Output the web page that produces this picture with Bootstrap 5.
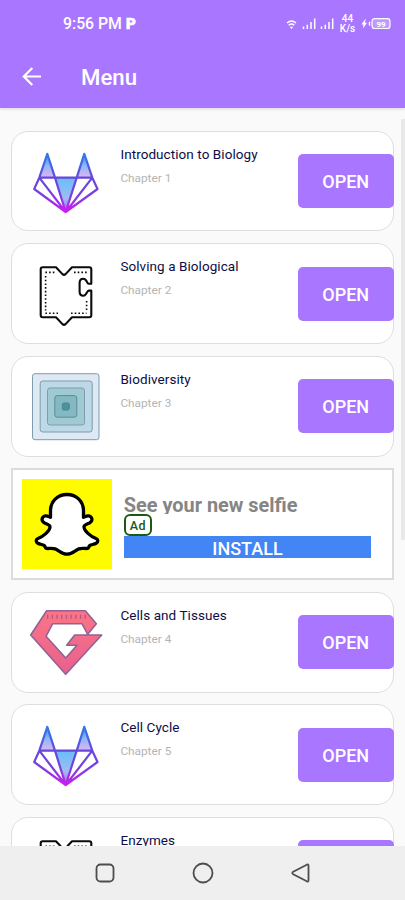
<!DOCTYPE html>
<html lang="en">
<head>
<meta charset="utf-8">
<meta name="viewport" content="width=device-width, initial-scale=1">
<title>Menu</title>
<link href="https://cdn.jsdelivr.net/npm/bootstrap@5.3.0/dist/css/bootstrap.min.css" rel="stylesheet">
<style>
  body { font-family: Roboto, sans-serif; background: #fafafa; height: 900px; }
  .app-head { background: #a977ff; height: 108px; box-shadow: 0 1px 3px rgba(0,0,0,.14); }
  .status { height: 46px; padding: 1px 14px 0 63px; }
  .clock { font-size: 15.8px; line-height: 20px; font-weight: 500; }
  .brand-p { font-size: 15px; font-weight: 900; -webkit-text-stroke: .7px #fff; margin-left: 4px; line-height: 20px; }
  .speed { font-size: 10px; line-height: 10.5px; font-weight: 500; width: 17px; margin: 1px 5px 0 4px; }
  .toolbar { height: 62px; padding: 0 20px; }
  .toolbar h1 { font-size: 22.2px; font-weight: 500; margin: 1px 0 0 37px; }
  .feed { padding: 22.5px 11.3px 0 11px; gap: 11.7px; }
  .chapter { height: 100.9px; flex: none; border: 1px solid #dedede; border-radius: 17px; background: #fff; }
  .pic { width: 100px; height: 99px; flex: none; margin-left: -1px; margin-top: -1px; overflow: visible; }
  .info { padding: 13px 0 0 9.4px; }
  .name { font-size: 13.5px; line-height: 18px; letter-spacing: .07px; color: #0d0d45; }
  .num { font-size: 11.8px; line-height: 16px; letter-spacing: 0; color: #b4b4b4; margin-top: 7px; }
  .open { width: 96px; height: 54px; background: #a977ff; border-radius: 5px; font-size: 18px; line-height: 27px; font-weight: 500; color: #fff; padding: 1px 0 0; border: 0; margin: 0 -1px 0 0; }
  .promo { height: 111.7px; flex: none; border: 2px solid #dcdcdc; background: #fff; padding: 9px 20.5px 0 9.4px; }
  .snap { width: 90px; height: 90px; background: #fffc00; flex: none; }
  .promo-body { padding: 14.3px 0 0 11.4px; }
  .headline { height: 20px; overflow: hidden; font-size: 19.9px; line-height: 24px; font-weight: 700; color: #858585; }
  .ad-tag { width: 28px; height: 22px; border: 2px solid #1b5a12; border-radius: 6px; font-size: 12.5px; line-height: 19px; font-weight: 500; color: #1b5a12; letter-spacing: .3px; }
  .install { height: 22.5px; background: #4285f4; font-size: 18px; line-height: 26px; font-weight: 500; border: 0; padding: 0; }
  .sys-nav { height: 54px; background: #efefef; z-index: 2; }
  .sys-nav svg { margin: 0 38px; }
  .thumb { position: absolute; right: 0; top: 119px; width: 4.5px; height: 421px; background: #e9e9e9; }
</style>
<script src="https://cdn.jsdelivr.net/npm/bootstrap@5.3.0/dist/js/bootstrap.bundle.min.js"></script>
</head>
<body class="d-flex flex-column overflow-hidden position-relative">
<svg width="0" height="0" class="position-absolute">
  <defs>
    <linearGradient id="foxLine" gradientUnits="userSpaceOnUse" x1="0" y1="22" x2="0" y2="82">
      <stop offset="0" stop-color="#2f7bea"/><stop offset=".42" stop-color="#6548da"/><stop offset=".7" stop-color="#7840e0"/><stop offset="1" stop-color="#d01cf0"/>
    </linearGradient>
    <linearGradient id="earFill" x1="0" y1="0" x2="0" y2="1"><stop offset="0" stop-color="#2f8df2"/><stop offset=".5" stop-color="#8cb8f4"/><stop offset="1" stop-color="#e2b4f4"/></linearGradient>
    <linearGradient id="faceFill" x1="0" y1="0" x2="0" y2="1"><stop offset="0" stop-color="#69bdfb"/><stop offset=".6" stop-color="#9dbdf2"/><stop offset="1" stop-color="#c94cf0"/></linearGradient>
    <linearGradient id="gemFill" x1="0" y1="0" x2="0" y2="1"><stop offset="0" stop-color="#fb7585"/><stop offset="1" stop-color="#e8608e"/></linearGradient>
    <symbol id="fox" viewBox="0 0 100 99">
      <path d="M36.3 22.5 28.3 46.7H44zM73.3 22.5 65.7 46.7h15.6z" fill="url(#earFill)"/>
      <path d="M44 46.7h21.7L54.7 81z" fill="url(#faceFill)"/>
      <path d="M36.3 22.8 28.3 46.7 23.2 58 54.7 81 86.5 58 81.3 46.7 73.3 22.8 65.7 46.7 54.7 81 44 46.7zM28.3 46.7h53M28.3 46.7 54.7 81 81.3 46.7" fill="none" stroke="url(#foxLine)" stroke-width="2.2" stroke-linejoin="round"/>
    </symbol>
    <symbol id="puzzle" viewBox="0 0 100 99">
      <g fill="none" stroke="#0b0b0b" stroke-width="2.1" stroke-linejoin="round">
        <path d="M31.7 24.3H45l6.4 6.8q1.6 1.6 3.2 0l6.4-6.8h17.3q2 0 2 2v14.5h-2.5q-1-.1-1.7-1.6c-1-2.4-2-3.5-3.8-3.5-2.3 0-3.7 1.8-3.7 4.2v8.6c0 2.4 1.4 4.2 3.7 4.2 1.8 0 2.8-1.1 3.8-3.5q.7-1.5 1.7-1.6h2.5v24.7q0 2-2 2H61l-6.4 6.8q-1.6 1.6-3.2 0L45 74.3H31.7q-2 0-2-2v-46q0-2 2-2z"/>
        <path d="M34.4 29.4H45M63 29.4h13.5M34.6 33v34.5M34.4 70.2H47M60 70.2h15.5M75.6 58v9.5" stroke-width="1.6" stroke-dasharray="1.6 2.1"/>
      </g>
    </symbol>
    <symbol id="squares" viewBox="0 0 100 99">
      <g stroke="#7d9cae" stroke-width="1">
        <rect x="21.5" y="17.7" width="66.5" height="66" rx="2.5" fill="#dee9f4"/>
        <rect x="29.2" y="25" width="52" height="51" rx="2.5" fill="#bdd8e6"/>
        <rect x="36.5" y="32" width="37" height="37" rx="2.5" fill="#a0cad3"/>
        <rect x="43.8" y="39.6" width="22" height="21.6" rx="2.5" fill="#85b9c2" stroke="#5c8b9d"/>
        <rect x="51.3" y="47" width="7" height="7" rx="1.5" fill="#4c929d" stroke="#488693"/>
      </g>
    </symbol>
    <symbol id="gem" viewBox="0 0 100 99">
      <path d="M35.7 18.7h38.6l11 13-8.6 10.6L71 31.7H41.7L35 44.3 54.7 66 66 53.3H55.7L63.7 43h27L54.7 82.3 19.7 43z" fill="url(#gemFill)" stroke="#926296" stroke-width="1.6" stroke-linejoin="round"/>
      <path d="M36 24.8h40" stroke="#a85b8b" stroke-width="4" stroke-dasharray="1.3 3.4"/>
    </symbol>
  </defs>
</svg>

<header class="app-head flex-shrink-0 text-white">
  <div class="status d-flex align-items-center">
    <span class="clock">9:56 PM</span><span class="brand-p">P</span>
    <svg class="ms-auto" width="49" height="14" viewBox="0 0 49 14" fill="none" stroke="#fff">
      <path d="M1 6q4.500-4 9 0M2.700 8.200q2.800-2.400 5.600 0" stroke-width="1.500"/><path d="M3.700 9.700h3.600L5.500 12z" fill="#fff" stroke="none"/>
      <path d="M17.500 12v-2.500M21.300 12V7.700M25 12V5M28.700 12V1.500M35.500 12v-2.500M39.300 12V7.700M43 12V5M46.700 12V1.500" stroke-width="1.500"/>
    </svg>
    <div class="speed text-center">44<br>K/s</div>
    <svg width="30" height="14" viewBox="0 0 30 14">
      <path d="M4.800 1.500 0.300 7.600h2.200L2 11.500l4-5.800H3.900z" fill="#fff"/>
      <path d="M8.500 4.700v4" stroke="#fff" stroke-width="1.400"/>
      <rect x="11" y="1.700" width="18" height="9.800" rx="2.500" fill="#bf9bff" stroke="#fff" stroke-width="1.200"/>
      <text x="20" y="9.500" text-anchor="middle" font-family="Roboto, sans-serif" font-size="8" font-weight="700" fill="#fff">99</text>
    </svg>
  </div>
  <div class="toolbar d-flex align-items-center">
    <svg width="24" height="24" viewBox="0 0 24 24" fill="none" stroke="#fff" stroke-width="2.200"><path d="M21 11.500H4M12.300 3 3.800 11.500l8.500 8.500"/></svg>
    <h1>Menu</h1>
  </div>
</header>

<main class="feed d-flex flex-column flex-grow-1 overflow-hidden">
  <article class="chapter d-flex"><svg class="pic"><use href="#fox"/></svg><div class="info"><div class="name">Introduction to Biology</div><div class="num">Chapter 1</div></div><button class="open btn ms-auto align-self-center">OPEN</button></article>
  <article class="chapter d-flex"><svg class="pic"><use href="#puzzle"/></svg><div class="info"><div class="name">Solving a Biological</div><div class="num">Chapter 2</div></div><button class="open btn ms-auto align-self-center">OPEN</button></article>
  <article class="chapter d-flex"><svg class="pic"><use href="#squares"/></svg><div class="info"><div class="name">Biodiversity</div><div class="num">Chapter 3</div></div><button class="open btn ms-auto align-self-center">OPEN</button></article>
  <section class="promo d-flex">
    <div class="snap">
      <svg class="d-block" width="90" height="90" viewBox="0 0 90 90"><path d="M45 15.500c-9.500 0-16.500 7-16.500 16.500v6.300c-2.500-1-5.500-2.500-7.500-.3-2 2.400-.5 5 2 6.300 2.500 1.200 5 1.500 5 3.500 0 4-6.500 9.700-12 11.700-2.500 1-2.300 3.500-.2 4.700 2.200 1.200 4.700 1.300 6.400 2.200 1 1 .8 2.600 2.300 3 2.500.4 5.500-.6 8.700.5 3.800 1.400 6.300 5.300 11.800 5.300s8-3.900 11.800-5.300c3.200-1.100 6.200-.1 8.700-.5 1.500-.4 1.300-2 2.300-3 1.700-.9 4.200-1 6.400-2.200 2.100-1.200 2.300-3.700-.2-4.700-5.500-2-12-7.700-12-11.700 0-2 2.500-2.300 5-3.500 2.500-1.300 4-3.900 2-6.300-2-2.200-5-.7-7.500.3V32c0-9.500-7-16.500-16.500-16.500z" fill="#fff" stroke="#000" stroke-width="3.300" stroke-linejoin="round"/></svg>
    </div>
    <div class="promo-body flex-grow-1">
      <div class="headline">See your new selfie</div>
      <div class="ad-tag text-center">Ad</div>
      <button class="install d-block w-100 text-white text-center">INSTALL</button>
    </div>
  </section>
  <article class="chapter d-flex"><svg class="pic"><use href="#gem"/></svg><div class="info"><div class="name">Cells and Tissues</div><div class="num">Chapter 4</div></div><button class="open btn ms-auto align-self-center">OPEN</button></article>
  <article class="chapter d-flex"><svg class="pic"><use href="#fox"/></svg><div class="info"><div class="name">Cell Cycle</div><div class="num">Chapter 5</div></div><button class="open btn ms-auto align-self-center">OPEN</button></article>
  <article class="chapter d-flex"><svg class="pic"><use href="#puzzle"/></svg><div class="info"><div class="name">Enzymes</div></div><button class="open btn ms-auto align-self-center" aria-label="Open Enzymes"></button></article>
</main>
<div class="thumb"></div>

<nav class="sys-nav d-flex flex-shrink-0 justify-content-center align-items-center">
  <svg width="22" height="22" viewBox="0 0 22 22" fill="none" stroke="#4d4d4d" stroke-width="1.800"><rect x="2.500" y="2.500" width="17" height="17" rx="4"/></svg>
  <svg width="22" height="22" viewBox="0 0 22 22" fill="none" stroke="#4d4d4d" stroke-width="1.800"><circle cx="11" cy="11" r="9.500"/></svg>
  <svg width="22" height="22" viewBox="0 0 22 22" fill="none" stroke="#4d4d4d" stroke-width="1.800"><path d="M3.200 9.800 16.800 2.700q1.700-.7 1.700 1v14.600q0 1.700-1.700 1L3.200 12.200q-1.800-1.200 0-2.400z"/></svg>
</nav>
</body>
</html>
